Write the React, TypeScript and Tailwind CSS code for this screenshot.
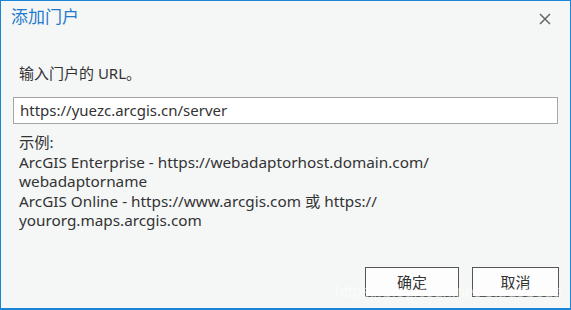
import React from "react";

export default function App() {
  const font = { fontFamily: '"Segoe UI", "Noto Sans", "Noto Sans CJK SC", sans-serif' };
  return (
    <div
      className="relative w-[571px] h-[310px] bg-[#f5f7f7] border border-b-2 border-[#1a84d6] flex flex-col text-[#333] overflow-hidden"
      style={font}
    >
      <div className="flex items-start justify-between h-[38px] pl-[10px] pr-[59px] pt-[4px]">
        <span className="text-[17px] leading-[22px] text-[#1f7acb]" style={{ fontFamily: '"Noto Sans CJK SC", sans-serif' }}>添加门户</span>
        <svg width="12" height="12" viewBox="0 0 12 12" className="mt-[8px] -mr-[40px]">
          <path d="M1 1L11 11M11 1L1 11" stroke="#666" strokeWidth="1.5" />
        </svg>
      </div>
      <div className="pl-[18px] mt-[24px] text-[15px] leading-[20px]">输入门户的 URL。</div>
      <div className="ml-[12px] mr-[12px] mt-[14px] h-[27px] bg-white border border-[#a6a6a6] flex items-center pl-[6px] text-[15px]">
        https://yuezc.arcgis.cn/server
      </div>
      <div className="pl-[18px] mt-[9px] text-[15.3px] leading-[19.5px]">
        <div>示例:</div>
        <div>ArcGIS Enterprise - https://webadaptorhost.domain.com/</div>
        <div>webadaptorname</div>
        <div>ArcGIS Online - https://www.arcgis.com 或 https://</div>
        <div>yourorg.maps.arcgis.com</div>
      </div>
      <div className="mt-auto mb-[11px] flex justify-end gap-[13px] pr-[11px]">
        <button className="w-[94px] h-[30px] bg-[#fdfdfd] border border-[#555] text-[15px] text-[#333]">确定</button>
        <button className="w-[87px] h-[30px] bg-[#fdfdfd] border border-[#555] text-[15px] text-[#333]">取消</button>
      </div>
      <div
        className="absolute left-[334px] top-[279px] text-[16px] text-white/50 pointer-events-none"
        style={{ fontFamily: '"Liberation Sans", sans-serif' }}
      >
        https://blog.csdn.net/CitrusSoda
      </div>
    </div>
  );
}
